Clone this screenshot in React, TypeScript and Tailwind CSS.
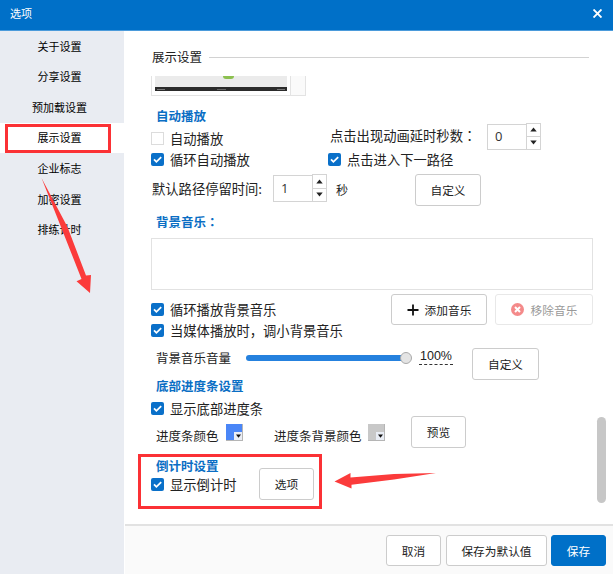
import React, { useState } from "react";
import clsx from "clsx";

interface IMenuItem {
    key: string
    name: string
}

const menuItems: IMenuItem[] = [
    { key: "about", name: "关于设置" },
    { key: "share", name: "分享设置" },
    { key: "preload", name: "预加载设置" },
    { key: "display", name: "展示设置" },
    { key: "logo", name: "企业标志" },
    { key: "encrypt", name: "加密设置" },
    { key: "rehearse", name: "排练计时" },
]

// full-width colon, centred in its cell
const Colon = () => <span className="font-['Noto_Sans_CJK_TC',sans-serif]">：</span>

const Checkbox = ({ label, defaultChecked = false }: { label: string, defaultChecked?: boolean }) => {
    const [checked, setChecked] = useState<boolean>(defaultChecked)
    return (
        <div className="flex h-[21px] cursor-pointer items-center whitespace-nowrap text-[13.3px]" onClick={() => setChecked(!checked)}>
            <span className={clsx("mr-[6px] flex h-[13px] w-[13px] shrink-0 items-center justify-center", checked ? "rounded-[2px] bg-[#0a70c9]" : "border border-[#dcdcdc] bg-white")}>
                {checked && (
                    <svg width="13" height="13" viewBox="0 0 13 13" fill="none" stroke="#fff" strokeWidth="1.8">
                        <path d="M3 6.4 L5.4 8.8 L10.2 4.1" />
                    </svg>
                )}
            </span>
            {label}
        </div>
    )
}

const Spinner = ({ initial, className }: { initial: number, className?: string }) => {
    const [value, setValue] = useState<number>(initial)
    return (
        <div className={clsx("flex w-[54px] shrink-0", className)}>
            <div className="mt-px flex flex-1 items-center border border-r-0 border-[#d4d4d4] pl-[7px] font-['Open_Sans',sans-serif] text-[13px] text-[#333]">{value}</div>
            <div className="flex w-[15px] flex-col border border-[#d4d4d4]">
                <button aria-label="增加" className="flex flex-1 items-center justify-center border-b border-[#d4d4d4]" onClick={() => setValue(value + 1)}>
                    <svg width="7" height="5" viewBox="0 0 7 5"><path d="M0.3 4.6 L3.5 0.4 L6.7 4.6 Z" fill="#222" /></svg>
                </button>
                <button aria-label="减少" className="flex flex-1 items-center justify-center" onClick={() => setValue(Math.max(0, value - 1))}>
                    <svg width="7" height="5" viewBox="0 0 7 5"><path d="M0.3 0.4 L3.5 4.6 L6.7 0.4 Z" fill="#222" /></svg>
                </button>
            </div>
        </div>
    )
}

const Button = ({ children, className }: { children: React.ReactNode, className?: string }) => (
    <button className={clsx("flex shrink-0 items-center justify-center whitespace-nowrap rounded-[3px] border text-[11.7px]", className)}>
        {children}
    </button>
)

const SectionTitle = ({ children }: { children: React.ReactNode }) => (
    <h3 className="ml-[5px] h-5 text-[12.5px] font-bold leading-5 text-[#0a6ec4]">{children}</h3>
)

const Swatch = ({ className }: { className: string }) => (
    <span className={clsx("flex h-[17px] w-[17px] items-end justify-end border-r border-b border-[#b5b5b5]", className)}>
        <span className="flex h-[8px] w-[8px] items-center justify-center bg-[#e9edf5]">
            <svg width="5" height="4" viewBox="0 0 5 4"><path d="M0 0.5 H5 L2.5 3.8 Z" fill="#111" /></svg>
        </span>
    </span>
)

const Sidebar = () => {
    const [active, setActive] = useState<string>("display")
    return (
        <div className="relative w-[124px] shrink-0 bg-[#e9ecf2]">
            <ul className="flex flex-col">
                {menuItems.map((item) => (
                    <li
                        key={item.key}
                        className={clsx("flex h-[30.65px] cursor-pointer items-center justify-center border-b border-[#e9ecf2] pr-[5px] text-[11px] text-black", active === item.key && "bg-white")}
                        onClick={() => setActive(item.key)}
                    >
                        {item.name}
                    </li>
                ))}
            </ul>
            <div className="pointer-events-none absolute left-[5px] top-[93px] h-[29px] w-[106px] border-[3px] border-[#fb3135]" />
            <svg className="pointer-events-none absolute left-[38px] top-[144px]" width="58" height="120" viewBox="0 0 58 120">
                <path d="M3.500 3 L29.500 52 L48 100.500 L53 100 L52 118 L38.500 106.300 L43.500 104 L23 52 Z" fill="#fb3b3b" />
            </svg>
        </div>
    )
}

const App = () => {
    return (
        <div className="flex h-[574px] w-[613px] flex-col overflow-hidden bg-white font-['Noto_Sans_CJK_SC',sans-serif] text-[#222]">
            <div className="flex h-[31px] shrink-0 items-center justify-between border-b border-[#4b9bdb] bg-[#0070c8] pb-[3px] pl-[10px] pr-[11px] text-[11px] text-white">
                <span>选项</span>
                <svg width="9" height="9" viewBox="0 0 9 9" stroke="#fff" strokeWidth="1.9"><path d="M0.500 0.500 L8.500 8.500 M8.500 0.500 L0.500 8.500" /></svg>
            </div>
            <div className="flex min-h-0 flex-1">
                <Sidebar />
                <div className="flex min-w-0 flex-1 flex-col pl-px">
                    <div className="relative flex-1 pl-[26px]">
                        <div className="flex h-[45px] items-center pt-[8px]">
                            <h2 className="ml-px w-[57px] whitespace-nowrap text-[12.5px]">展示设置</h2>
                            <span className="h-px w-[380px] bg-[#d2d2d2]" />
                        </div>
                        {/* bottom edge of the player preview, scrolled under the title */}
                        <div className="flex h-5 w-[155px] border-b border-l border-r border-[#e3e3e3]">
                            <div className="flex w-[139px] flex-col items-center border-r border-[#e3e3e3] px-[3px]">
                                <div className="flex h-[11px] w-full justify-center bg-[#ebebeb] pl-[14px]">
                                    <span className="h-[3px] w-[11px] rounded-b-full bg-[#8cc04f]" />
                                </div>
                                <div className="flex h-1 w-full items-center justify-between bg-[#2b2b2b] px-[2px]">
                                    <span className="h-px w-[8px] bg-[#777]" />
                                    <span className="h-px w-[9px] bg-[#666]" />
                                    <span className="h-px w-[8px] bg-[#777]" />
                                </div>
                            </div>
                            <div className="flex-1 bg-[#fafafa]" />
                        </div>
                        <div className="pt-[10px]"><SectionTitle>自动播放</SectionTitle></div>
                        <div className="mt-[2px] flex">
                            <div className="w-[177px] shrink-0">
                                <Checkbox label="自动播放" />
                                <Checkbox label="循环自动播放" defaultChecked />
                            </div>
                            <div className="-mt-[5px]">
                                <div className="flex h-[26px] items-center">
                                    <span className="ml-[2px] w-[157px] whitespace-nowrap text-[13.3px]">点击出现动画延时秒数<Colon /></span>
                                    <Spinner initial={0} className="h-[27px]" />
                                </div>
                                <Checkbox label="点击进入下一路径" defaultChecked />
                            </div>
                        </div>
                        <div className="mt-[4px] flex h-8 items-start">
                            <span className="ml-px w-[121px] whitespace-nowrap pt-[5px] text-[13.3px] leading-5">默认路径停留时间:</span>
                            <Spinner initial={1} className="h-7" />
                            <span className="ml-[9px] w-[79px] pt-[6px] text-[12px] leading-5">秒</span>
                            <Button className="h-8 w-[66px] border-[#ccc]">自定义</Button>
                        </div>
                        <div className="mt-[6px]"><SectionTitle>背景音乐<Colon /></SectionTitle></div>
                        <div className="mt-[6px] h-[52px] w-[442px] border border-[#e2e2e2]" />
                        <div className="mt-[4px] flex items-start">
                            <div className="w-[240px] shrink-0 pt-[5px]">
                                <Checkbox label="循环播放背景音乐" defaultChecked />
                                <Checkbox label="当媒体播放时，调小背景音乐" defaultChecked />
                            </div>
                            <Button className="h-[31px] w-[96px] border-[#ccc]">
                                <svg className="mr-[6px]" width="12" height="12" viewBox="0 0 12 12" stroke="#111" strokeWidth="1.8"><path d="M6 0.5 V11.5 M0.5 6 H11.5" /></svg>
                                添加音乐
                            </Button>
                            <Button className="ml-[8px] h-[31px] w-[98px] border-[#e8e8e8] text-[#999]">
                                <svg className="mr-[7px]" width="13" height="13" viewBox="0 0 13 13"><circle cx="6.500" cy="6.500" r="6.500" fill="#f48a8a" /><path d="M4 4 L9 9 M9 4 L4 9" stroke="#fff" strokeWidth="2" /></svg>
                                移除音乐
                            </Button>
                        </div>
                        <div className="mt-[7px] flex h-8 items-start">
                            <span className="ml-[5px] w-[90px] whitespace-nowrap text-[12.5px] leading-5">背景音乐音量</span>
                            <div className="mt-[4px] flex h-3 w-[166px] items-center">
                                <span className="h-[6px] w-[156px] rounded-l-full bg-[#2581de]" />
                                <span className="-ml-[2px] h-3 w-3 shrink-0 rounded-full border border-[#aaa] bg-[#e4e4e4]" />
                            </div>
                            <span className="ml-[7px] w-[34px] border-b border-dashed border-[#333] text-center font-['Liberation_Sans',sans-serif] text-[12.5px] leading-[16px]">100%</span>
                            <Button className="ml-[19px] h-8 w-[67px] border-[#ccc]">自定义</Button>
                        </div>
                        <div className="-mt-[4px]"><SectionTitle>底部进度条设置</SectionTitle></div>
                        <div className="mt-[2px]"><Checkbox label="显示底部进度条" defaultChecked /></div>
                        <div className="-mt-[3px] flex h-8 items-start text-[12.5px] leading-5">
                            <span className="ml-[5px] w-[70px] whitespace-nowrap pt-[10px]">进度条颜色</span>
                            <div className="pt-[8px]"><Swatch className="bg-[#4a86f7]" /></div>
                            <span className="ml-[31px] w-[94px] whitespace-nowrap pt-[10px]">进度条背景颜色</span>
                            <div className="pt-[8px]"><Swatch className="bg-[#c8c8c8]" /></div>
                            <Button className="ml-[26px] h-8 w-[55px] border-[#ccc]">预览</Button>
                        </div>
                        <div className="relative mt-[8px]">
                            <SectionTitle>倒计时设置</SectionTitle>
                            <div className="-mt-[2px] flex">
                                <div className="w-[108px]"><Checkbox label="显示倒计时" defaultChecked /></div>
                                <Button className="-mt-[6px] h-8 w-[55px] border-[#ccc]">选项</Button>
                            </div>
                            <div className="pointer-events-none absolute -left-[13px] -top-[2px] h-[55px] w-[184px] border-[3px] border-[#fb3135]" />
                            <svg className="pointer-events-none absolute left-[183px] top-[14px]" width="104" height="22" viewBox="0 0 104 22">
                                <path d="M0.500 11.500 L16.500 3 L16.500 7.500 L60 4 L102 3 L60 9.500 L17.500 14.700 L17.500 18.500 Z" fill="#fb3b3b" />
                            </svg>
                        </div>
                        <div className="absolute right-[7px] top-[386px] h-[86px] w-[9px] rounded-full bg-[#c7c7c7]" />
                    </div>
                    <div className="flex h-[50px] shrink-0 justify-end border-t-2 border-[#e2e2e2] bg-[#fafafa] pr-[7px] pt-[9px]">
                        <Button className="mr-[5px] h-[31px] w-[55px] border-[#ccc] bg-white">取消</Button>
                        <Button className="mr-[4px] h-[31px] w-[101px] border-[#ccc] bg-white">保存为默认值</Button>
                        <Button className="h-[31px] w-[55px] border-[#0070c8] bg-[#0070c8] text-white">保存</Button>
                    </div>
                </div>
            </div>
        </div>
    )
}

export default App
